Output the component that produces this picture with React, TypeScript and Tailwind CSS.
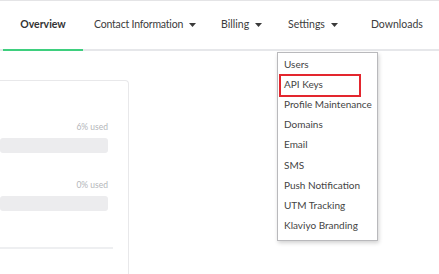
import React from "react";

const Caret = () => (
  <svg width="7" height="4" viewBox="0 0 7 4" className="ml-[6px] inline-block shrink-0">
    <path d="M0 0 L7 0 L3.5 4 Z" fill="#3a3a3a" />
  </svg>
);

const settingsItems = [
  "Users",
  "API Keys",
  "Profile Maintenance",
  "Domains",
  "Email",
  "SMS",
  "Push Notification",
  "UTM Tracking",
  "Klaviyo Branding",
];

export default function App() {
  return (
    <div
      className="relative w-[439px] h-[274px] overflow-hidden bg-white border-t border-[#e4e4e6]"
      style={{ fontFamily: "Lato, 'Noto Sans', sans-serif" }}
    >
      {/* top tabs */}
      <div className="flex items-end h-[50px] border-b-2 border-[#e6e7ea] text-[10.5px] text-[#3c3c3c] whitespace-nowrap">
        <div className="shrink-0 ml-[3px] w-[80px] h-[50px] flex items-center justify-center font-bold text-[#333] border-b-2 border-[#3ecf7e] -mb-[2px]">
          Overview
        </div>
        <div className="shrink-0 ml-[11px] h-[48px] flex items-center tracking-[-0.2px]">
          Contact Information
          <Caret />
        </div>
        <div className="shrink-0 ml-[25px] h-[48px] flex items-center">
          Billing
          <Caret />
        </div>
        <div className="shrink-0 ml-[26px] h-[48px] flex items-center">
          Settings
          <Caret />
        </div>
        <div className="shrink-0 ml-[33px] h-[48px] flex items-center">Downloads</div>
      </div>

      {/* usage card */}
      <div className="mt-[29px] ml-[-40px] w-[169px] h-[220px] border-t border-r border-[#e8e8ea] rounded-tr-[4px]">
        <div className="pt-[41px] pr-[20px] pl-[40px]">
          <div className="text-right text-[8.5px] text-[#b4b6ba] leading-[10px]">6% used</div>
          <div className="mt-[6px] h-[15px] rounded-[3px] bg-[#ececee]" />
          <div className="mt-[27px] text-right text-[8.5px] text-[#b4b6ba] leading-[10px]">0% used</div>
          <div className="mt-[6px] h-[15px] rounded-[3px] bg-[#ececee]" />
        </div>
        <div className="mt-[36px] mr-[15px] border-t-2 border-[#eeeff1]" />
      </div>

      {/* settings dropdown */}
      <div className="absolute left-[277px] top-[51px] w-[101px] h-[189px] bg-white border border-[#b9b9bc] shadow-[1px_2px_4px_rgba(0,0,0,0.18)] pt-[1px]">
        {settingsItems.map((item) => (
          <div key={item} className="relative h-[20.2px] pl-[6px] flex items-center text-[10px] text-[#444]">
            {item === "API Keys" && (
              <div className="absolute left-[1px] top-[0px] w-[82px] h-[23px] border-2 border-[#e3262e]" />
            )}
            {item}
          </div>
        ))}
      </div>
    </div>
  );
}
